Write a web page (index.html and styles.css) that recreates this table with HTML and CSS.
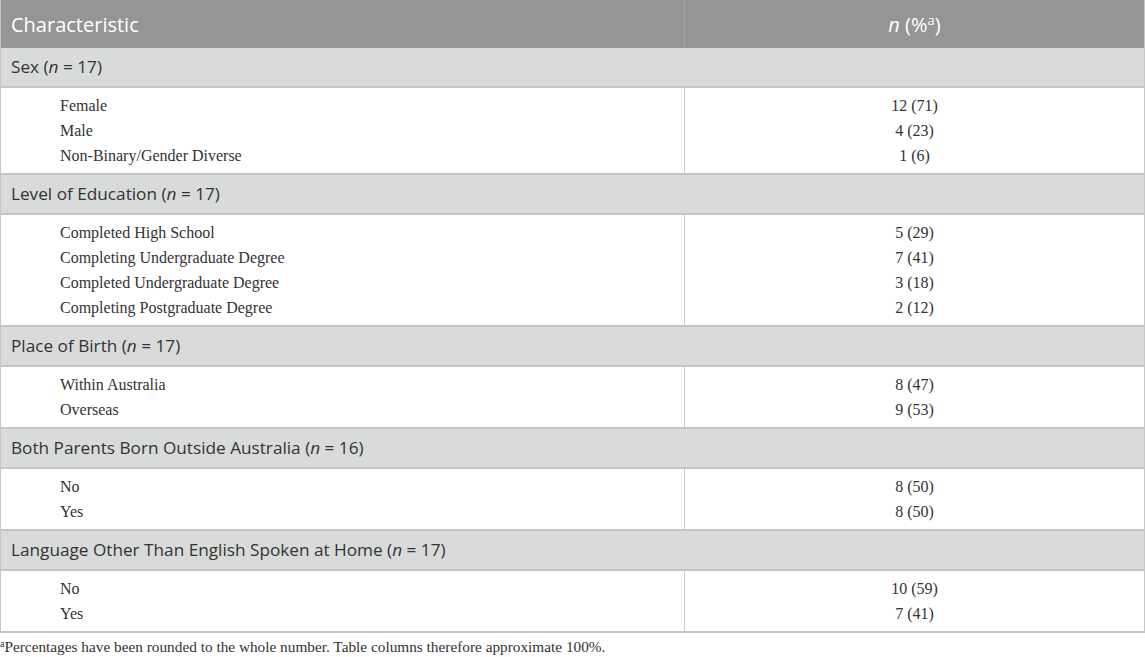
FILE: index.html
```html
<!DOCTYPE html>
<html>
<head>
<meta charset="utf-8">
<link rel="stylesheet" href="styles.css">
</head>
<body>
<table class="tbl">
  <colgroup><col class="c1"><col class="c2"></colgroup>
  <thead>
    <tr><th class="h-char">Characteristic</th><th class="h-n"><i>n</i> (%<sup>a</sup>)</th></tr>
  </thead>
  <tbody>
    <tr class="grp"><td colspan="2">Sex (<i>n</i> = 17)</td></tr>
    <tr class="row first"><td>Female</td><td>12 (71)</td></tr>
    <tr class="row"><td>Male</td><td>4 (23)</td></tr>
    <tr class="row last"><td>Non-Binary/Gender Diverse</td><td>1 (6)</td></tr>

    <tr class="grp"><td colspan="2">Level of Education (<i>n</i> = 17)</td></tr>
    <tr class="row first"><td>Completed High School</td><td>5 (29)</td></tr>
    <tr class="row"><td>Completing Undergraduate Degree</td><td>7 (41)</td></tr>
    <tr class="row"><td>Completed Undergraduate Degree</td><td>3 (18)</td></tr>
    <tr class="row last"><td>Completing Postgraduate Degree</td><td>2 (12)</td></tr>

    <tr class="grp"><td colspan="2">Place of Birth (<i>n</i> = 17)</td></tr>
    <tr class="row first"><td>Within Australia</td><td>8 (47)</td></tr>
    <tr class="row last"><td>Overseas</td><td>9 (53)</td></tr>

    <tr class="grp"><td colspan="2">Both Parents Born Outside Australia (<i>n</i> = 16)</td></tr>
    <tr class="row first"><td>No</td><td>8 (50)</td></tr>
    <tr class="row last"><td>Yes</td><td>8 (50)</td></tr>

    <tr class="grp"><td colspan="2">Language Other Than English Spoken at Home (<i>n</i> = 17)</td></tr>
    <tr class="row first"><td>No</td><td>10 (59)</td></tr>
    <tr class="row last"><td>Yes</td><td>7 (41)</td></tr>
  </tbody>
</table>
<p class="foot"><sup>a</sup>Percentages have been rounded to the whole number. Table columns therefore approximate 100%.</p>
</body>
</html>
```

FILE: styles.css
```css
html, body {
  margin: 0;
  padding: 0;
  background: #ffffff;
}

.tbl {
  width: 1145px;
  border-collapse: separate;
  border-spacing: 0;
  table-layout: fixed;
  border-left: 1px solid #c6c6c6;
  border-right: 1px solid #c6c6c6;
}

.c1 { width: 684px; }
.c2 { width: 459px; }

.tbl th {
  height: 48px;
  padding: 0 10px;
  background: #959595;
  color: #ffffff;
  font-family: "Open Sans", sans-serif;
  font-weight: 400;
  font-size: 20px;
  text-align: left;
}

.tbl th.h-char {
  border-right: 1px solid #a3a3a3;
}

.tbl th.h-n {
  text-align: center;
}

.tbl th sup {
  font-size: 13px;
  vertical-align: 7px;
  line-height: 0;
}

.grp td {
  background: #d9dbdb;
  color: #333333;
  font-family: "Open Sans", sans-serif;
  font-size: 17.2px;
  line-height: 38px;
  padding: 0 10px;
  border-bottom: 2px solid #c4c6c6;
}

.row td {
  font-family: "Liberation Serif", serif;
  font-size: 16px;
  color: #333333;
  line-height: 25px;
  padding: 0;
}

.row td:first-child {
  padding-left: 59px;
  border-right: 1px solid #c8c8c8;
}

.row td:last-child {
  text-align: center;
}

.row.first td { padding-top: 5px; }
.row.last td {
  padding-bottom: 5px;
  border-bottom: 2px solid #c4c6c6;
}

.foot {
  margin: 5px 0 0 0;
  font-family: "Liberation Serif", serif;
  font-size: 15.3px;
  color: #333333;
  line-height: 18px;
}

.foot sup {
  font-size: 10px;
  vertical-align: 5px;
  line-height: 0;
}
```
